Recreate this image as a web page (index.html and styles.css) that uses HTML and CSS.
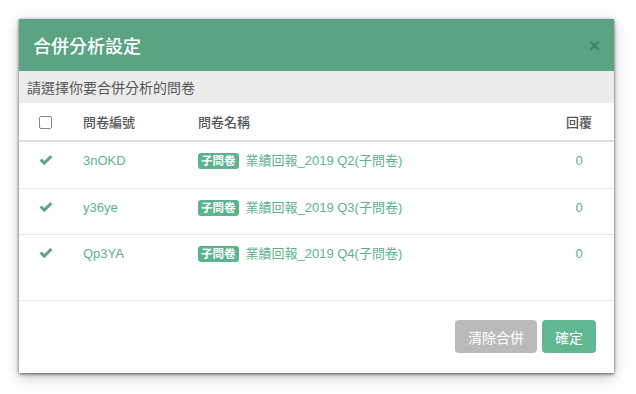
FILE: index.html
```html
<!DOCTYPE html>
<html lang="zh-Hant">
<head>
    <meta charset="UTF-8">
    <meta name="viewport" content="width=device-width, initial-scale=1.0">
    <title>合併分析設定</title>
    <link rel="stylesheet" href="styles.css">
</head>
<body>
    <div class="modal">
        <div class="modal-header">
            <h4>合併分析設定</h4>
            <span class="close">&times;</span>
        </div>
        <div class="modal-sub">請選擇你要合併分析的問卷</div>

        <div class="modal-body">
            <div class="row head">
                <div class="col-check"><span class="checkbox"></span></div>
                <div>問卷編號</div>
                <div>問卷名稱</div>
                <div class="col-num">回覆</div>
            </div>
            <div class="row">
                <div class="col-check"><svg class="tick" viewBox="0 0 14 11"><path d="M0.5 5.5 L2.6 3.4 L5.3 6.1 L11.4 0 L13.5 2.1 L5.3 10.3 Z"/></svg></div>
                <div class="green">3nOKD</div>
                <div class="green"><span class="label">子問卷</span>業績回報_2019 Q2(子問卷)</div>
                <div class="col-num green">0</div>
            </div>
            <div class="row">
                <div class="col-check"><svg class="tick" viewBox="0 0 14 11"><path d="M0.5 5.5 L2.6 3.4 L5.3 6.1 L11.4 0 L13.5 2.1 L5.3 10.3 Z"/></svg></div>
                <div class="green">y36ye</div>
                <div class="green"><span class="label">子問卷</span>業績回報_2019 Q3(子問卷)</div>
                <div class="col-num green">0</div>
            </div>
            <div class="row">
                <div class="col-check"><svg class="tick" viewBox="0 0 14 11"><path d="M0.5 5.5 L2.6 3.4 L5.3 6.1 L11.4 0 L13.5 2.1 L5.3 10.3 Z"/></svg></div>
                <div class="green">Qp3YA</div>
                <div class="green"><span class="label">子問卷</span>業績回報_2019 Q4(子問卷)</div>
                <div class="col-num green">0</div>
            </div>
        </div>

        <div class="modal-footer">
            <button class="btn btn-grey">清除合併</button>
            <button class="btn btn-green">確定</button>
        </div>
    </div>
</body>
</html>
```

FILE: styles.css
```css
body {
    margin: 0;
    padding: 19px;
    background-color: #fff;
    font-family: "Liberation Sans", "Noto Sans CJK TC", sans-serif;
    color: #555;
}
.modal {
    width: 595px;
    height: 354px;
    background-color: #fff;
    box-shadow: 0 1px 3px rgba(0, 0, 0, 0.6), 0 4px 12px rgba(0, 0, 0, 0.25);
    display: flex;
    flex-direction: column;
}
.modal-header {
    height: 52px;
    background-color: #5aa483;
    display: flex;
    align-items: center;
    justify-content: space-between;
    padding: 0 14px;
}
.modal-header h4 {
    margin: 0;
    color: #fff;
    font-size: 18px;
    font-weight: 500;
}
.close {
    color: #417f63;
    font-size: 19px;
    font-weight: bold;
    line-height: 1;
}
.modal-sub {
    height: 32px;
    line-height: 34px;
    background-color: #ececec;
    padding-left: 8px;
    font-size: 14px;
    color: #555;
}
.modal-body {
    flex: 1;
}
.row {
    display: grid;
    grid-template-columns: 64px 115px 1fr 70px;
    height: 46px;
    padding-top: 11px;
    box-sizing: border-box;
    font-size: 13px;
    line-height: 16px;
    border-top: 1px solid #e6e6e6;
}
.row.head {
    height: 39px;
    padding-top: 12px;
    font-weight: 500;
    border-top: none;
    border-bottom: 2px solid #ddd;
    color: #555;
}
.row.head + .row {
    border-top: none;
}
.col-check {
    padding-left: 20px;
}
.col-num {
    text-align: center;
}
.checkbox {
    display: inline-block;
    width: 11px;
    height: 11px;
    border: 1px solid #888;
    border-radius: 2px;
    margin-top: 1px;
}
.tick {
    width: 14px;
    height: 11px;
    margin-top: 2px;
    fill: #5aa883;
}
.green {
    color: #5cb38c;
}
.label {
    display: inline-block;
    background-color: #5cb38c;
    color: #fff;
    font-size: 11.5px;
    font-weight: bold;
    line-height: 16px;
    padding: 0 3px;
    border-radius: 3px;
    margin-right: 7px;
}
.modal-footer {
    border-top: 1px solid #e6e6e6;
    padding: 19px 18px 20px;
    display: flex;
    justify-content: flex-end;
    gap: 5px;
}
.btn {
    height: 33px;
    padding: 0 13px;
    border: none;
    border-radius: 4px;
    color: #fff;
    font-family: inherit;
    font-size: 14px;
}
.btn-grey {
    background-color: #bababa;
}
.btn-green {
    background-color: #5fb891;
}
```
